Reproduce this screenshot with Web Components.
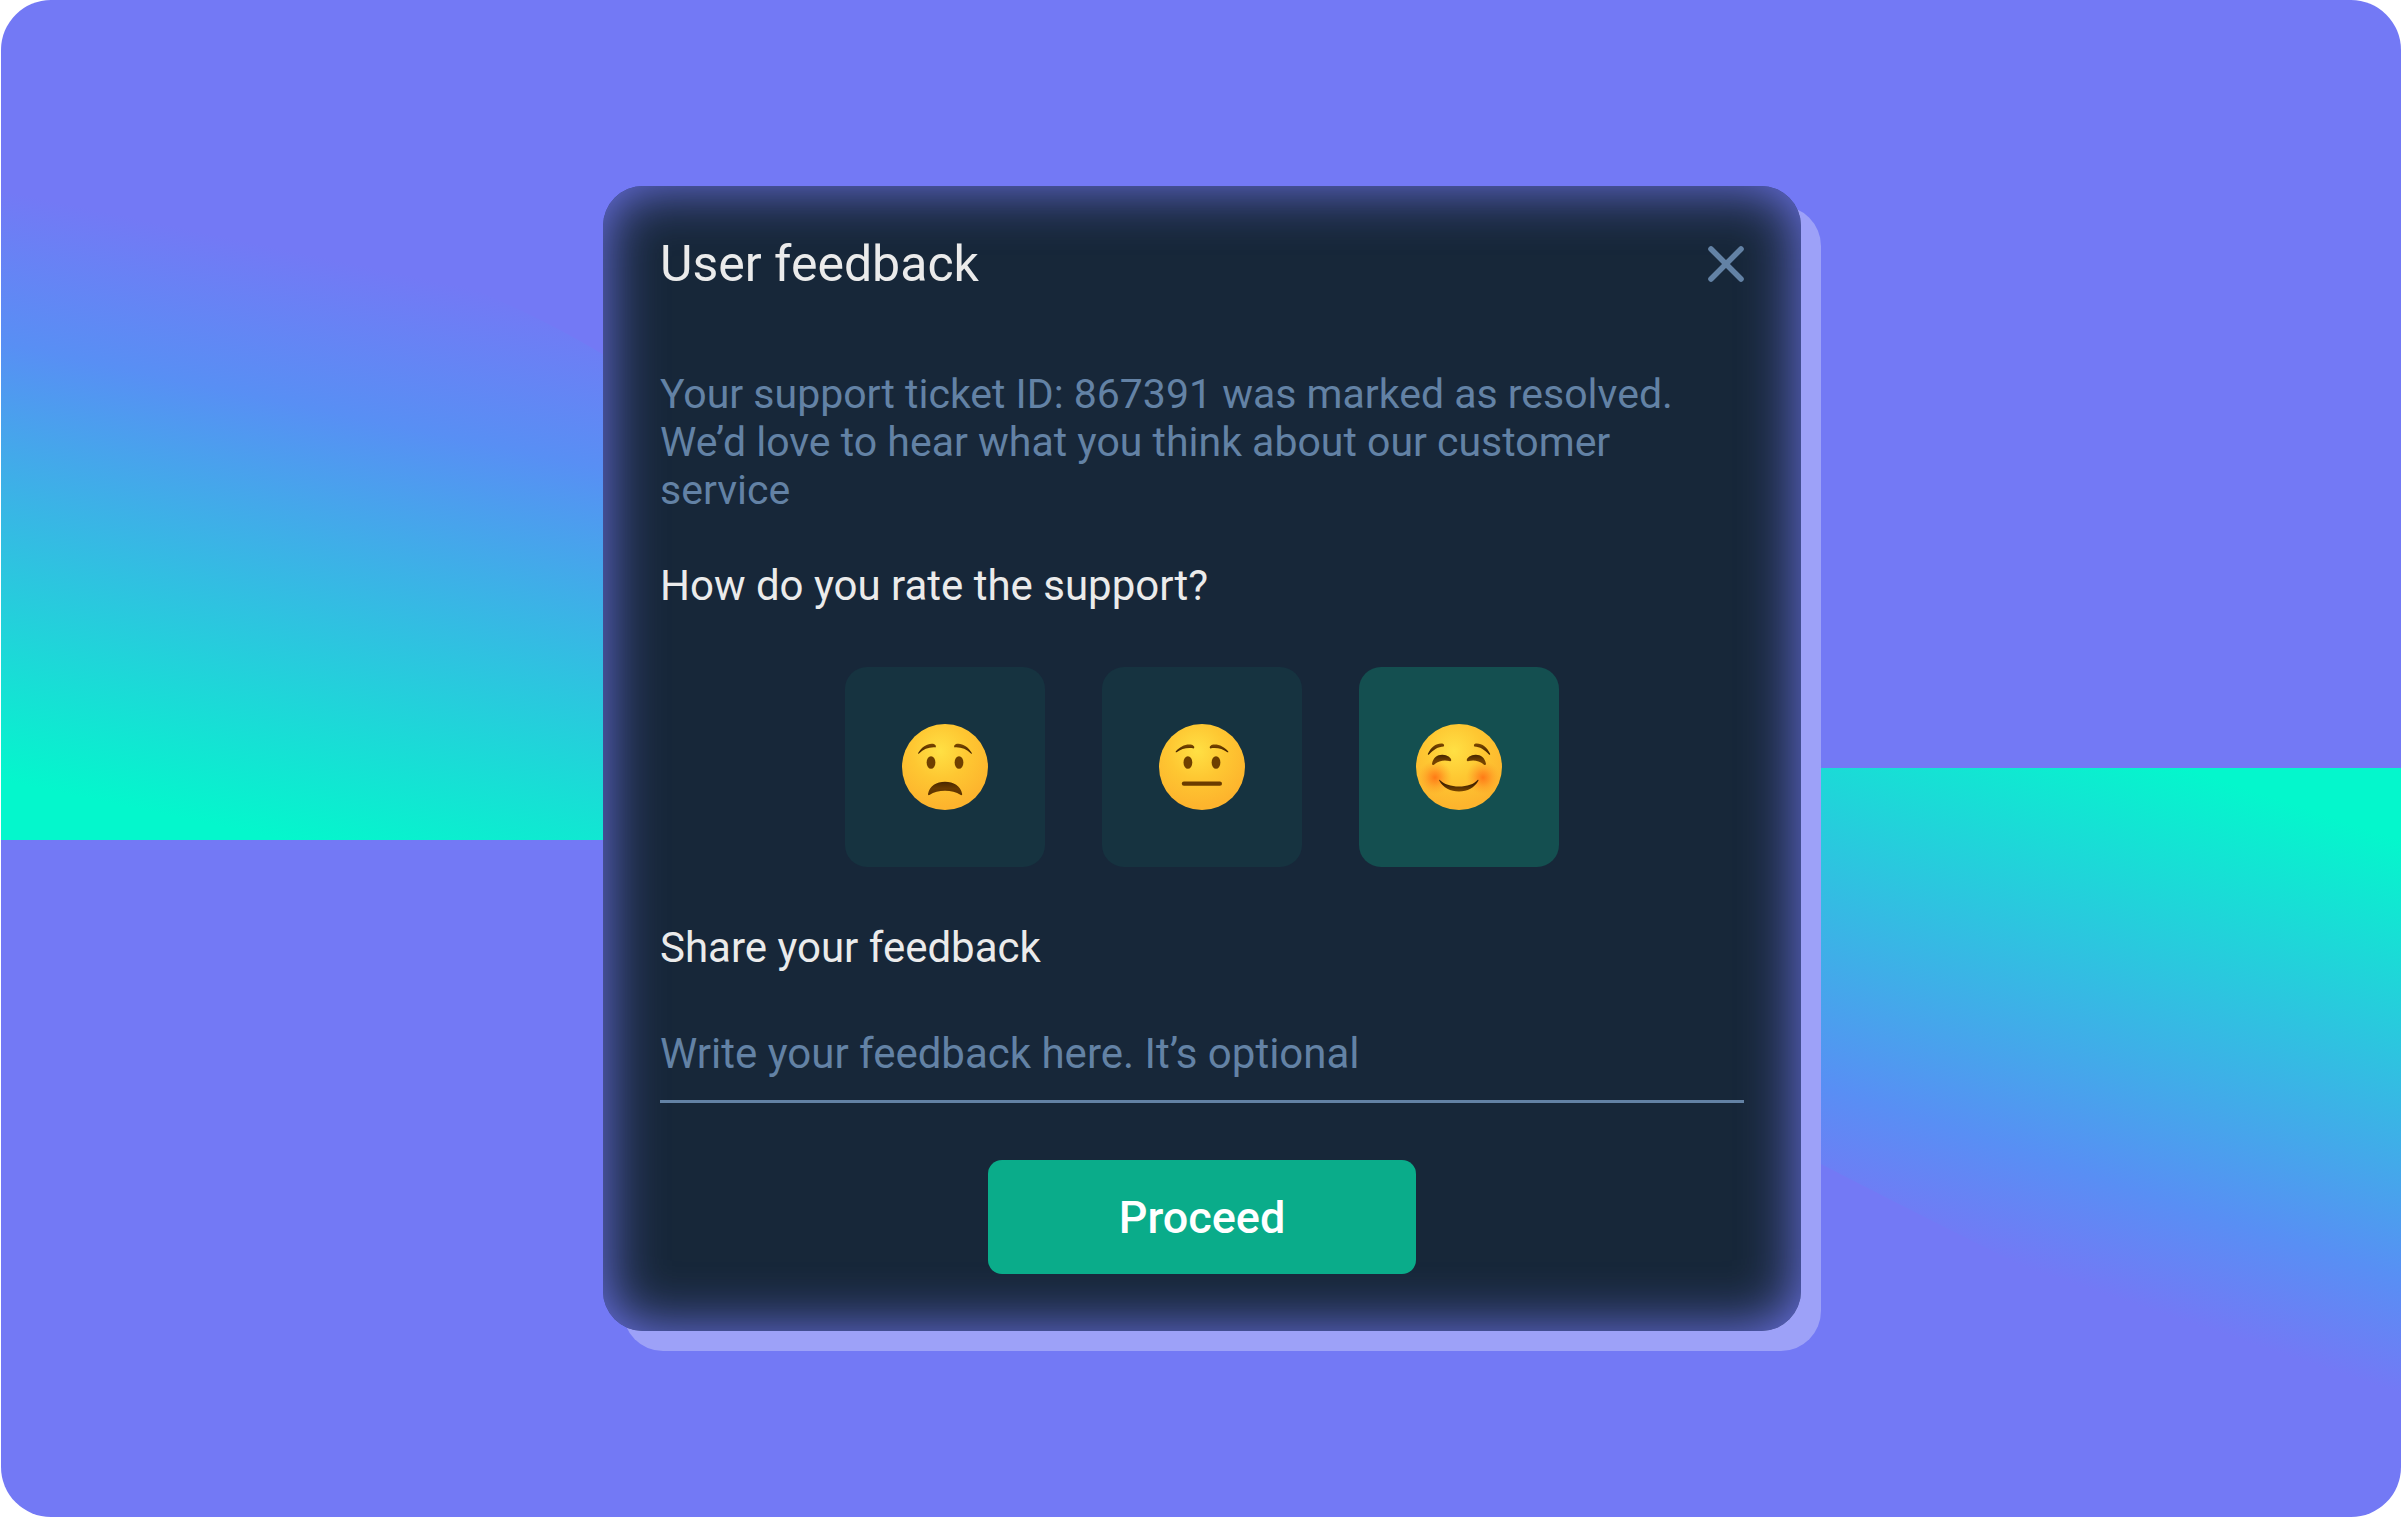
<!DOCTYPE html>
<html lang="en">
<head>
<meta charset="utf-8">
<meta name="viewport" content="width=device-width, initial-scale=1">
<title>User feedback</title>
<style>
  body { margin: 0; background: #fff; font-family: Roboto, "Liberation Sans", sans-serif; }
</style>
</head>
<body>
<feedback-stage>
  <feedback-card heading="User feedback">
    <p slot="intro">Your support ticket ID: 867391 was marked as resolved. We’d love to hear what you think about our customer service</p>
    <rating-group question="How do you rate the support?"></rating-group>
    <line-field label="Share your feedback" placeholder="Write your feedback here. It’s optional"></line-field>
    <action-button slot="action">Proceed</action-button>
  </feedback-card>
</feedback-stage>

<script>
const define = (name, html, setup) => customElements.define(name, class extends HTMLElement {
  constructor() {
    super();
    this.attachShadow({ mode: 'open' }).innerHTML = html;
  }
  connectedCallback() { if (setup) setup(this, this.shadowRoot); }
});

define('feedback-stage', `
  <style>
    :host { display: grid; place-items: center; position: relative; isolation: isolate; box-sizing: border-box;
      min-height: 100vh; margin-left: 1px; padding: 48px 48px 48px 50px; border-radius: 50px; overflow: hidden; background: #7379f5; }
    svg { position: absolute; inset: 0; width: 100%; height: 100%; z-index: -1; }
  </style>
  <svg viewBox="0 0 2400 1517" preserveAspectRatio="none" aria-hidden="true">
    <defs>
      <linearGradient id="l" gradientUnits="userSpaceOnUse" x1="0" y1="190" x2="-118" y2="756">
        <stop offset="0" stop-color="#7379f5"/><stop offset=".26" stop-color="#588ff4"/><stop offset="1" stop-color="#04f7cc"/>
      </linearGradient>
      <linearGradient id="r" gradientUnits="userSpaceOnUse" x1="2400" y1="1394" x2="2567" y2="896">
        <stop offset="0" stop-color="#7379f5"/><stop offset=".21" stop-color="#588ff4"/><stop offset="1" stop-color="#04f7cc"/>
      </linearGradient>
    </defs>
    <path fill="url(#l)" d="M0 150L300 230Q480 280 603 355Q700 420 760 500V840H0Z"/>
    <path fill="url(#r)" d="M1700 768H2400V1420Q2230 1370 2089 1300Q1940 1226 1820 1164L1700 1090Z"/>
  </svg>
  <slot></slot>`);

define('feedback-card', `
  <style>
    :host { display: block; box-sizing: border-box; width: 100%; max-width: 1198px; padding: 50px 57px 57px; border-radius: 40px;
      background: #172739; box-shadow: inset 0 0 57px #7379f5, 20px 20px 0 #9da1f8; color: #ebebeb; }
    header { display: flex; align-items: center; justify-content: space-between; margin-bottom: 78px; }
    h1 { margin: 0; font-size: 50px; line-height: 56px; font-weight: 400; }
    button { display: flex; padding: 0; border: 0; background: none; color: #6382a5; cursor: pointer; }
    ::slotted(p) { margin: 0 0 48px; font-size: 41px; line-height: 48px; color: #6382a5; }
    .body { display: flex; flex-direction: column; gap: 57px; }
    footer { display: flex; justify-content: center; margin-top: 57px; }
  </style>
  <header><h1></h1>
    <button type="button" aria-label="Close"><svg width="36" height="36" viewBox="0 0 36 36" fill="none" stroke="currentColor" stroke-width="5.6" stroke-linecap="round"><path d="M3 3L33 33M33 3L3 33"/></svg></button>
  </header>
  <slot name="intro"></slot>
  <div class="body"><slot></slot></div>
  <footer><slot name="action"></slot></footer>`,
  (el, root) => { root.querySelector('h1').textContent = el.getAttribute('heading'); });

const brow = d => `<path d="${d}"/><path d="${d}" transform="matrix(-1 0 0 1 86 0)"/>`;
const faces = {
  sad: `<g fill="url(#dk)">${brow('M16 29.3C20 22 27 18.5 32 20Q35 21.8 33.4 23.4C27 23 21.5 25 17 29.5Q16.2 30 16 29.3Z')}</g>
    <g fill="#6f3f00"><ellipse cx="29" cy="38.5" rx="4.4" ry="6.3"/><ellipse cx="57" cy="38.5" rx="4.4" ry="6.3"/></g>
    <path fill="url(#mo)" d="M26 70C27.5 61.5 34.5 57.7 43 57.7S58.5 61.5 60.2 70Q60.3 71.6 58.8 71C54 68 49 66.7 43 66.7S32 68 27.4 71Q25.8 71.6 26 70Z"/>`,
  neutral: `<g fill="url(#dk)">${brow('M16.6 27.8C21 22 28 19.4 33.5 21Q36.3 22.8 34.8 24.4C28.5 23.2 22.5 24.6 17.6 28.2Q16.7 28.6 16.6 27.8Z')}</g>
    <g fill="#6f3f00"><ellipse cx="28.9" cy="38.5" rx="4.4" ry="6.3"/><ellipse cx="57" cy="38.5" rx="4.4" ry="6.3"/></g>
    <rect fill="#6a3b00" x="22.8" y="57.6" width="40.2" height="4.2" rx="2.1"/>`,
  happy: `<circle cx="19" cy="53.5" r="17" fill="url(#ch)"/><circle cx="67" cy="53.5" r="17" fill="url(#ch)"/>
    <g fill="url(#dk)">${brow('M11.8 30C15 23 20.5 19 26.3 19.6Q29 20.8 27.7 22.4C22 22.6 17.5 25.6 13 30.4Q11.8 31 11.8 30Z')}</g>
    <g fill="url(#ey)">${brow('M16 40C17 33.5 21.5 30.5 26.5 30.7S35 33.6 35.3 36.3Q34.8 37.8 33.3 37C28 35.6 22 36.8 18 40.7Q16.4 41.7 16 40Z')}</g>
    <path fill="url(#sm)" d="M23.5 55.8C28 60.3 35 62.6 43 62.6S58 60.3 61.8 55.8Q62.9 55.5 62.4 56.8C58.5 63.6 51.5 67.6 43 67.6S27 63.6 23.3 56.8Q22.8 55.4 23.5 55.8Z"/>`
};

define('mood-face', `<style>:host { display: block; width: 86px; height: 86px; } svg { display: block; }</style><div></div>`,
  (el, root) => {
    root.querySelector('div').innerHTML = `<svg width="86" height="86" viewBox="0 0 86 86" aria-hidden="true"><defs>
      <radialGradient id="bg" gradientUnits="userSpaceOnUse" cx="38" cy="27" r="56"><stop offset="0" stop-color="#ffe044"/><stop offset=".5" stop-color="#fec732"/><stop offset="1" stop-color="#fdb42d"/></radialGradient>
      <radialGradient id="ch"><stop offset="0" stop-color="#ff7a16"/><stop offset=".35" stop-color="#ff8a1e" stop-opacity=".75"/><stop offset="1" stop-color="#ffa52a" stop-opacity="0"/></radialGradient>
      <linearGradient id="dk" x1="0" y1="0" x2="0" y2="1"><stop offset="0" stop-color="#7c4700"/><stop offset="1" stop-color="#3d2000"/></linearGradient>
      <linearGradient id="mo" x1="0" y1="0" x2="0" y2="1"><stop offset="0" stop-color="#482600"/><stop offset=".5" stop-color="#683a00"/><stop offset="1" stop-color="#5e3300"/></linearGradient>
      <linearGradient id="ey" x1="0" y1="0" x2="0" y2="1"><stop offset="0" stop-color="#442400"/><stop offset=".6" stop-color="#744200"/></linearGradient>
      <linearGradient id="sm" x1="0" y1="0" x2="0" y2="1"><stop offset=".4" stop-color="#432300"/><stop offset="1" stop-color="#7a4700"/></linearGradient>
      </defs><circle cx="43" cy="43" r="43" fill="url(#bg)"/>${faces[el.getAttribute('mood')]}</svg>`;
  });

define('rating-group', `
  <style>
    :host { display: block; }
    fieldset { margin: 0; padding: 0; border: 0; min-width: 0; }
    legend { padding: 0; margin-bottom: 57px; font-size: 42px; line-height: 48px; }
    .row { display: flex; flex-wrap: wrap; justify-content: center; gap: 57px; }
    label { display: grid; place-items: center; width: 200px; height: 200px; border-radius: 22px; background: #163340; cursor: pointer; }
    label:has(:checked) { background: #144f50; }
    label > * { grid-area: 1 / 1; }
    input { appearance: none; width: 200px; height: 200px; margin: 0; border-radius: 22px; cursor: pointer; }
    mood-face { pointer-events: none; }
  </style>
  <fieldset><legend></legend>
    <div class="row">
      <label><input type="radio" name="rating" value="sad" aria-label="Unhappy"><mood-face mood="sad"></mood-face></label>
      <label><input type="radio" name="rating" value="neutral" aria-label="Neutral"><mood-face mood="neutral"></mood-face></label>
      <label><input type="radio" name="rating" value="happy" aria-label="Happy" checked><mood-face mood="happy"></mood-face></label>
    </div>
  </fieldset>`,
  (el, root) => { root.querySelector('legend').textContent = el.getAttribute('question'); });

define('line-field', `
  <style>
    :host { display: flex; flex-direction: column; gap: 57px; }
    label { font-size: 42px; line-height: 48px; }
    input { box-sizing: border-box; width: 100%; height: 74px; margin: 0; padding: 0 0 23px; border: 0; border-bottom: 3px solid #6382a5;
      border-radius: 0; outline: 0; background: none; color: inherit; font: inherit; font-size: 42px; line-height: 48px; }
    input::placeholder { color: #6382a5; opacity: 1; }
  </style>
  <label for="field"></label><input id="field" type="text">`,
  (el, root) => {
    root.querySelector('label').textContent = el.getAttribute('label');
    root.querySelector('input').placeholder = el.getAttribute('placeholder');
  });

define('action-button', `
  <style>
    :host { display: block; }
    button { display: block; min-width: 428px; height: 114px; padding: 0 48px; border: 0; border-radius: 14px; background: #0aac8a; color: #fff;
      font: inherit; font-size: 45px; font-weight: 500; cursor: pointer; }
  </style>
  <button type="button"><slot></slot></button>`);
</script>
</body>
</html>
